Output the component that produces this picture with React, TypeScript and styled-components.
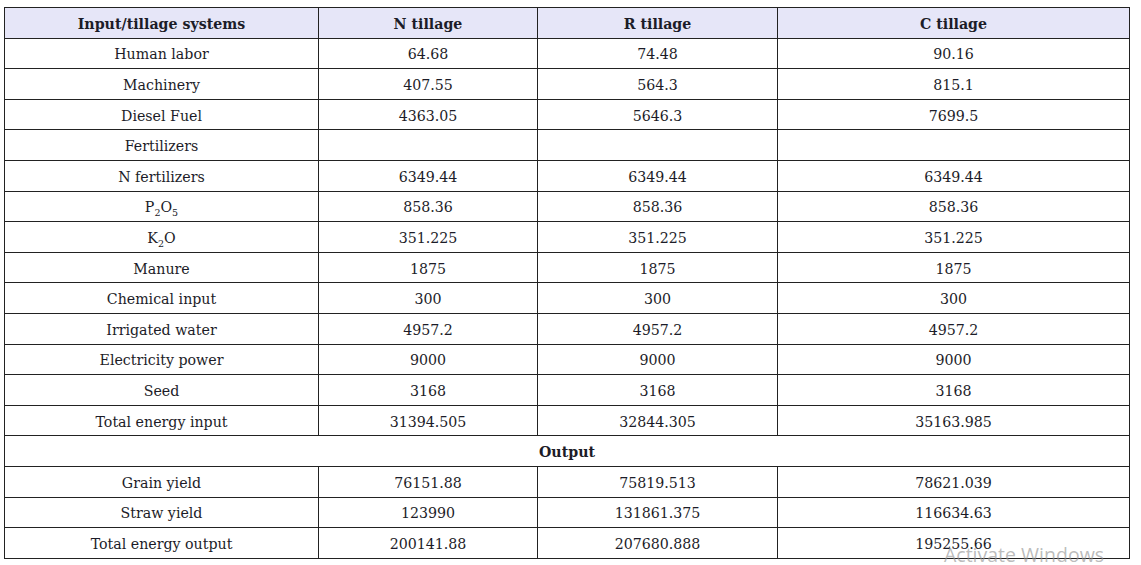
import React from "react";
import styled, { createGlobalStyle } from "styled-components";

const Global = createGlobalStyle`
  html, body { margin: 0; padding: 0; background: #fff; }
  body { font-family: "DejaVu Serif", serif; }
`;

const Page = styled.div`
  position: relative;
  width: 1141px;
  height: 565px;
  padding: 7px 0 0 4px;
  box-sizing: border-box;
  overflow: hidden;
`;

const Table = styled.table`
  border-collapse: collapse;
  table-layout: fixed;
  width: 1125px;
  font-family: "DejaVu Serif", serif;
  font-size: 14.2px;
  color: #1c1c28;
`;

const Row = styled.tr`
  height: 30.6px;
`;

const HeadCell = styled.th`
  border: 1.5px solid #222;
  background: #e6e6f8;
  font-weight: bold;
  text-align: center;
  vertical-align: middle;
  padding: 2px 0 0;
`;

const Cell = styled.td<{ $bold?: boolean }>`
  border: 1.5px solid #222;
  text-align: center;
  vertical-align: middle;
  padding: 2px 0 0;
  font-weight: ${(p) => (p.$bold ? "bold" : "normal")};
`;

const Sub = styled.sub`
  font-size: 9.5px;
  vertical-align: -4px;
  line-height: 0;
`;

const Watermark = styled.div`
  position: absolute;
  left: 944px;
  top: 541px;
  font-family: "Open Sans", sans-serif;
  font-size: 19.5px;
  color: rgba(150, 150, 150, 0.65);
  white-space: nowrap;
  pointer-events: none;
`;

type R = { label: React.ReactNode; v: [string, string, string] };

const inputs: R[] = [
  { label: "Human labor", v: ["64.68", "74.48", "90.16"] },
  { label: "Machinery", v: ["407.55", "564.3", "815.1"] },
  { label: "Diesel Fuel", v: ["4363.05", "5646.3", "7699.5"] },
  { label: "Fertilizers", v: ["", "", ""] },
  { label: "N fertilizers", v: ["6349.44", "6349.44", "6349.44"] },
  {
    label: (
      <>
        P<Sub>2</Sub>O<Sub>5</Sub>
      </>
    ),
    v: ["858.36", "858.36", "858.36"],
  },
  {
    label: (
      <>
        K<Sub>2</Sub>O
      </>
    ),
    v: ["351.225", "351.225", "351.225"],
  },
  { label: "Manure", v: ["1875", "1875", "1875"] },
  { label: "Chemical input", v: ["300", "300", "300"] },
  { label: "Irrigated water", v: ["4957.2", "4957.2", "4957.2"] },
  { label: "Electricity power", v: ["9000", "9000", "9000"] },
  { label: "Seed", v: ["3168", "3168", "3168"] },
  { label: "Total energy input", v: ["31394.505", "32844.305", "35163.985"] },
];

const outputs: R[] = [
  { label: "Grain yield", v: ["76151.88", "75819.513", "78621.039"] },
  { label: "Straw yield", v: ["123990", "131861.375", "116634.63"] },
  { label: "Total energy output", v: ["200141.88", "207680.888", "195255.66"] },
];

const DataRow = ({ r }: { r: R }) => (
  <Row>
    <Cell>{r.label}</Cell>
    {r.v.map((x, i) => (
      <Cell key={i}>{x}</Cell>
    ))}
  </Row>
);

export default function App() {
  return (
    <Page>
      <Global />
      <Table>
        <colgroup>
          <col style={{ width: 314 }} />
          <col style={{ width: 219 }} />
          <col style={{ width: 240 }} />
          <col style={{ width: 352 }} />
        </colgroup>
        <thead>
          <Row>
            <HeadCell>Input/tillage systems</HeadCell>
            <HeadCell>N tillage</HeadCell>
            <HeadCell>R tillage</HeadCell>
            <HeadCell>C tillage</HeadCell>
          </Row>
        </thead>
        <tbody>
          {inputs.map((r, i) => (
            <DataRow key={i} r={r} />
          ))}
          <Row>
            <Cell colSpan={4} $bold>
              Output
            </Cell>
          </Row>
          {outputs.map((r, i) => (
            <DataRow key={i} r={r} />
          ))}
        </tbody>
      </Table>
      <Watermark>Activate Windows</Watermark>
    </Page>
  );
}
